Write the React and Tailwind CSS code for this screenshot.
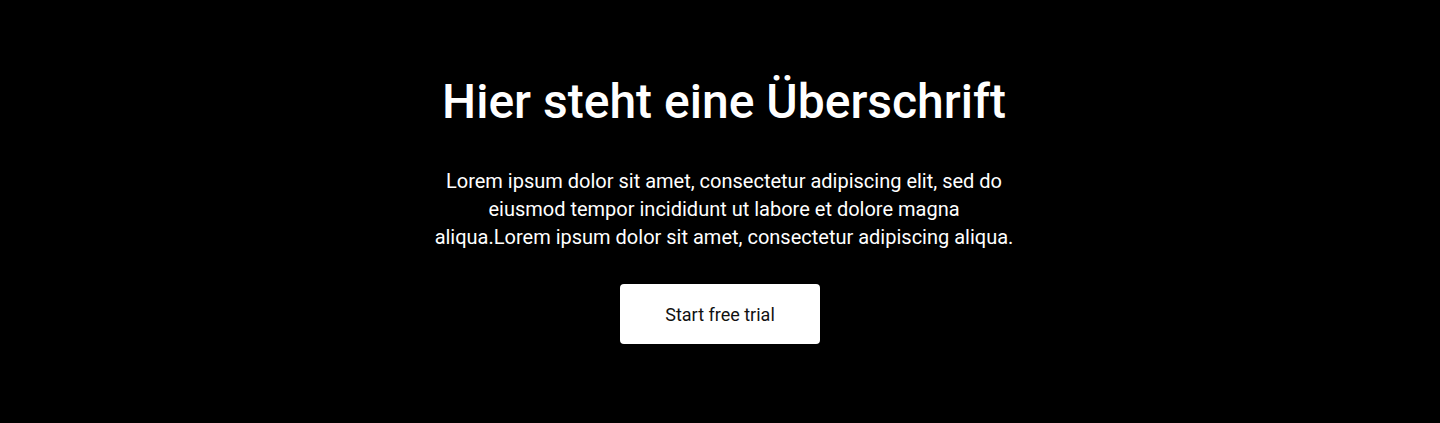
export default function App() {
  return (
    <div className="flex h-[423px] w-full flex-col items-center bg-black pt-[74px] text-center font-['Roboto',sans-serif] text-white">
      <h1 className="pl-2 text-[48px] font-medium leading-[56px]">Hier steht eine Überschrift</h1>
      <p className="mt-[37px] max-w-[593px] pl-2 text-[20px] leading-[28px]">
        Lorem ipsum dolor sit amet, consectetur adipiscing elit, sed do eiusmod tempor incididunt ut labore et dolore
        magna aliqua.Lorem ipsum dolor sit amet, consectetur adipiscing aliqua.
      </p>
      <button className="mt-[33px] h-[60px] w-[200px] rounded-[4px] bg-white text-[18px] text-[#111]">
        Start free trial
      </button>
    </div>
  );
}
